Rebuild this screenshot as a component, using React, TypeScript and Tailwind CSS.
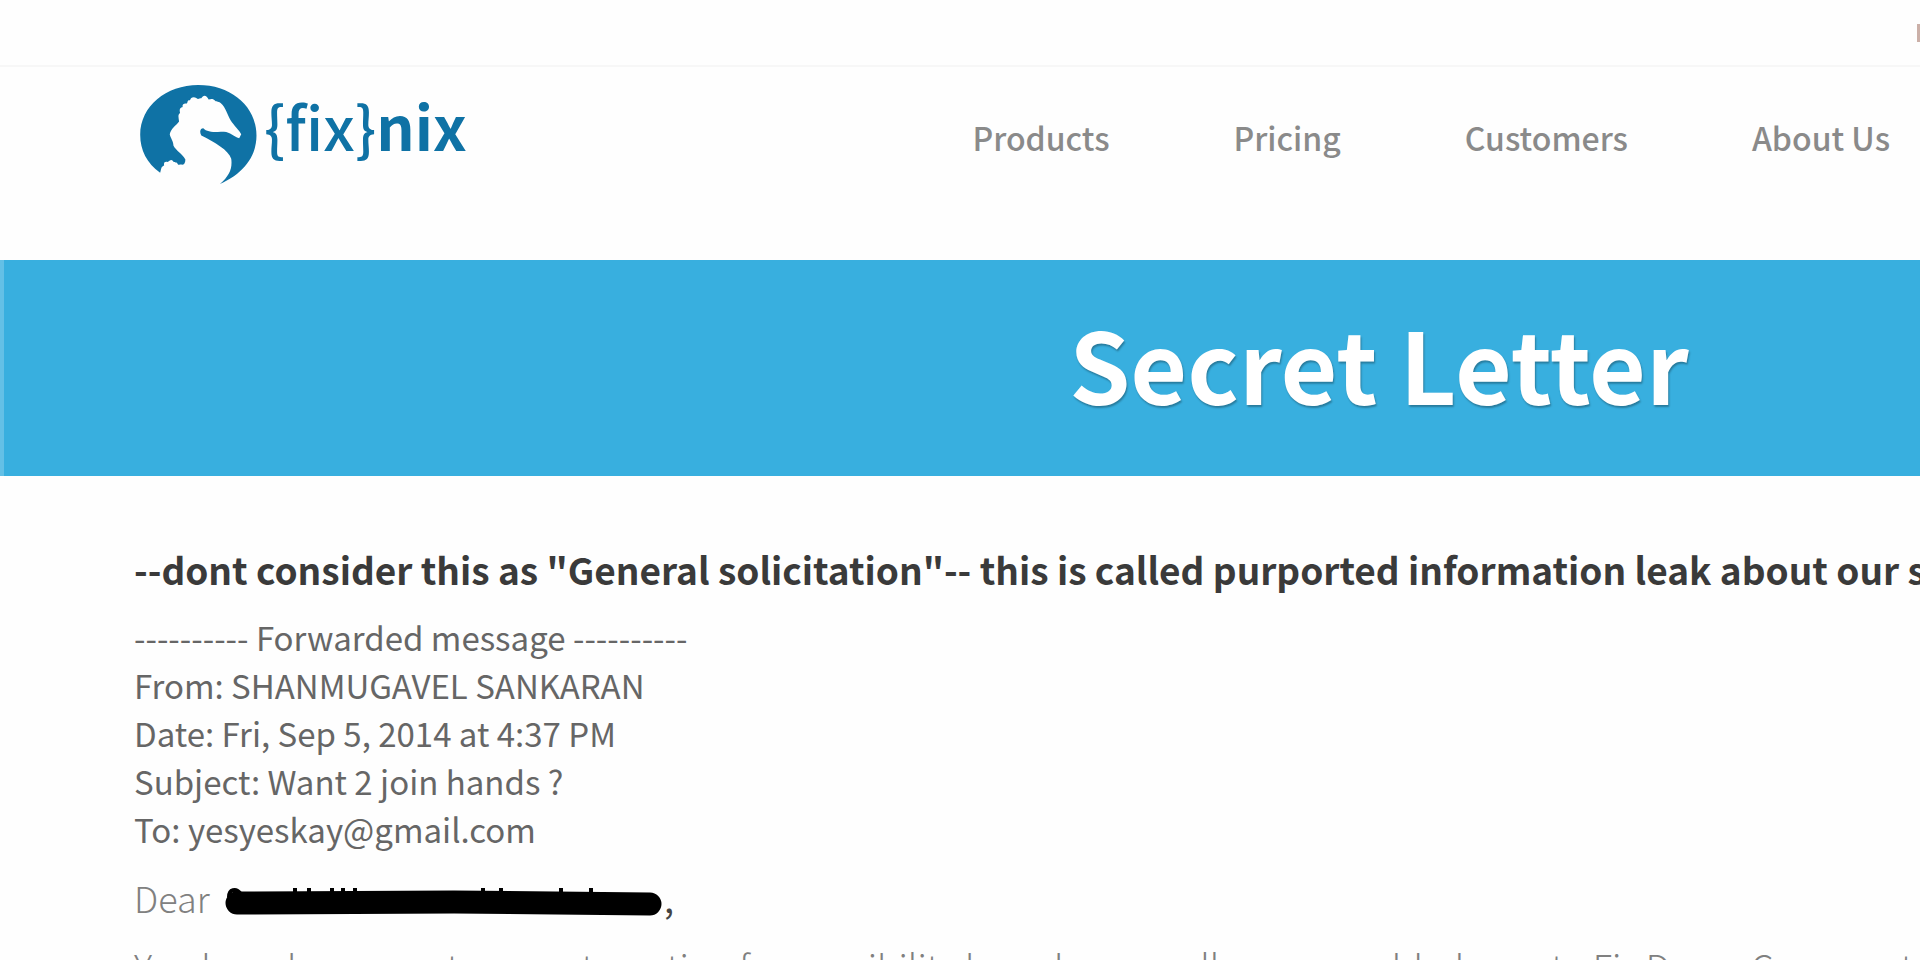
import React from 'react';

const navItems = ['Products', 'Pricing', 'Customers', 'About Us'];

const messageHeaders = [
  '---------- Forwarded message ----------',
  'From: SHANMUGAVEL SANKARAN',
  'Date: Fri, Sep 5, 2014 at 4:37 PM',
  'Subject: Want 2 join hands ?',
  'To: yesyeskay@gmail.com',
];

const Logo = () => (
  <a href="#" className="flex items-start gap-1 text-[#0f72a5]" aria-label="fixnix home">
    {/* Seahorse badge */}
    <svg viewBox="0 0 360 310" className="w-[120px] h-[103px] shrink-0" fill="currentColor" aria-hidden="true">
      <path d="M60 264 C20 236 0 196 0 150 C0 64 78 0 175 0 C276 0 350 66 350 152 C350 216 310 266 240 298 C268 274 278 252 274 222 C266 196 224 172 184 152 C178 142 180 130 190 130 C200 142 224 142 252 141 C272 142 280 156 298 160 L304 148 C298 136 282 122 272 106 C262 88 258 68 242 54 C234 48 228 52 224 46 C218 40 212 42 206 44 C200 30 190 28 184 40 C178 40 174 44 170 40 C160 34 152 38 150 46 C140 44 144 54 140 56 C130 54 126 60 128 66 C118 68 118 76 120 84 C112 90 116 98 117 110 C108 122 92 132 89 148 C91 160 100 168 100 182 C108 198 126 206 136 224 C136 234 132 240 126 240 C120 238 116 244 112 236 C108 230 102 236 98 228 C92 222 88 230 82 232 C76 230 70 232 72 242 C62 246 64 252 60 264 Z" />
    </svg>
    <span className="text-[60px] leading-[80px] font-medium">
      {'{fix}'}
      <b>nix</b>
    </span>
  </a>
);

const Header = () => (
  <header>
    <div className="flex h-[67px] items-center justify-end border-b-2 border-[#f7f7f7]">
      <span className="h-[18px] w-[3px] bg-[#cbb0a8]" />
    </div>
    <div className="flex items-start justify-between pl-[140px] pr-[30px] pt-[18px] h-[193px]">
      <Logo />
      <nav className="flex gap-[124px] pt-[30px] text-[32px] leading-[44px] font-medium text-[#8a8a8a]">
        {navItems.map((item) => (
          <a key={item} href="#">{item}</a>
        ))}
      </nav>
    </div>
  </header>
);

// Blacked-out recipient name, with the tops of the tall letters showing
const Redacted = () => (
  <svg viewBox="0 0 440 40" className="mt-3 w-[440px] h-10" fill="none" stroke="#000" aria-hidden="true">
    <path d="M13 18 L230 17 L426 19" strokeWidth="23" strokeLinecap="round" strokeLinejoin="round" />
    <path d="M5 12 C5 4 12 3 16 8" strokeWidth="4" />
    <path d="M71 3 V12 M85 3 V12 M108 3 V12 M119 3 V12 M131 3 V12 M259 3 V12 M277 3 V12 M337 3 V12 M367 3 V12" strokeWidth="4" />
  </svg>
);

const App = () => {
  return (
    <div className="h-screen overflow-hidden bg-[#fefefe] font-['Noto_Sans_CJK_SC',sans-serif]">
      <Header />

      <section className="bg-[#38afdf] border-l-4 border-[#63c0e6] h-[216px] pl-[834px] pb-3 flex items-center justify-center whitespace-nowrap">
        <h1 className="text-[98px] leading-[120px] font-bold text-white [text-shadow:1px_2px_2px_rgb(0_0_0/0.3)]">Secret Letter</h1>
      </section>

      <main className="pl-[134px] pt-[69px] whitespace-nowrap">
        <p className="text-[37px] leading-[48px] font-bold text-[#3a3a3a]">
          --dont consider this as "General solicitation"-- this is called purported information leak about our secret
        </p>

        <div className="mt-5 text-[33px] leading-[48px] text-[#666]">
          {messageHeaders.map((line) => (
            <p key={line}>{line}</p>
          ))}
        </div>

        <div className="mt-5 text-[36px] leading-[48px] font-light text-[#808080] flex">
          <span className="w-[90px]">Dear</span>
          <Redacted />
          <b className="text-[#444]">,</b>
        </div>

        <p className="mt-4 text-[36px] leading-[48px] font-light text-[#808080]">
          You have been great, our automation for possibility based on usually comes added over to Fix Demo Comment
        </p>
      </main>
    </div>
  );
};

export default App;
